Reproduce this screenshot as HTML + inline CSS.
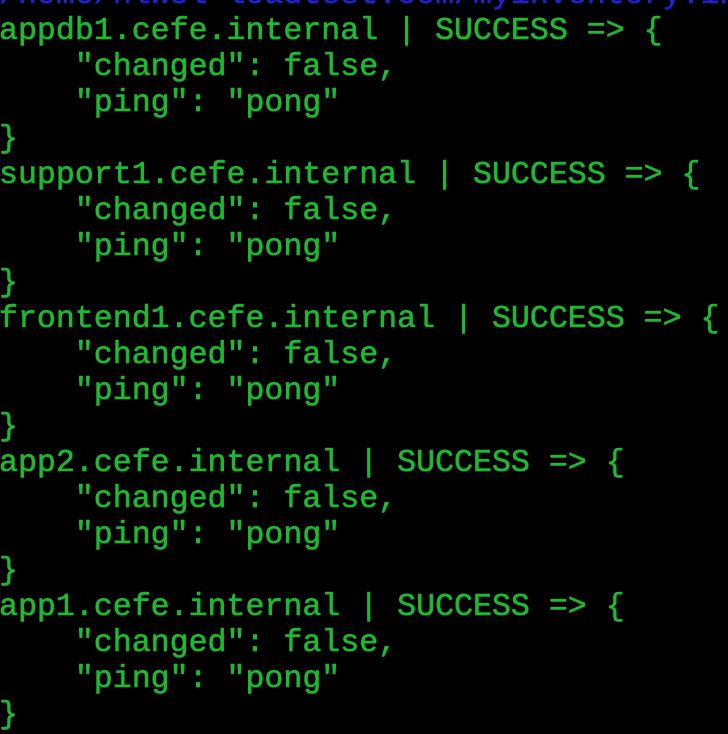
<!DOCTYPE html>
<html><head><meta charset="utf-8"><style>
html,body{margin:0;padding:0;background:#000;width:728px;height:725px;overflow:hidden}
pre{position:absolute;left:-1px;top:-22px;margin:0;font-family:"Liberation Mono","Courier New",monospace;font-weight:normal;font-size:31.6px;line-height:36px;color:#1fb832;white-space:pre;-webkit-text-stroke:0.6px #1fb832}
.b{color:#2222c8;-webkit-text-stroke:0.6px #2222c8}
</style></head><body><pre><span class="b">/home/hlwsl-loadtest.com/myinventory.ini</span>
appdb1.cefe.internal | SUCCESS => {
    "changed": false,
    "ping": "pong"
}
support1.cefe.internal | SUCCESS => {
    "changed": false,
    "ping": "pong"
}
frontend1.cefe.internal | SUCCESS => {
    "changed": false,
    "ping": "pong"
}
app2.cefe.internal | SUCCESS => {
    "changed": false,
    "ping": "pong"
}
app1.cefe.internal | SUCCESS => {
    "changed": false,
    "ping": "pong"
}</pre></body></html>
